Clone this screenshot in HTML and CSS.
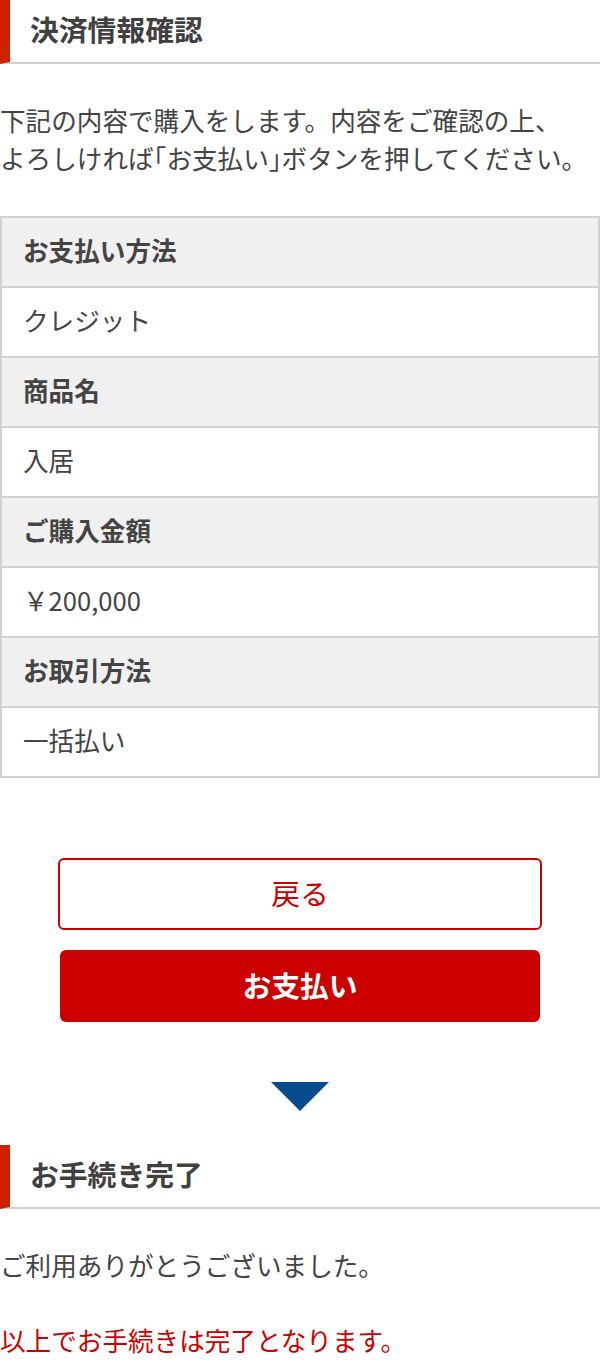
FILE: index.html
```html
<!DOCTYPE html>
<html lang="ja">
<head>
  <meta charset="UTF-8" />
  <title>決済情報確認</title>
  <link rel="stylesheet" href="styles.css">
</head>
<body>
  <h2 class="section-title">決済情報確認</h2>

  <p class="lead">下記の内容で購入をします。内容をご確認の上、<br>よろしければ<span class="kakko">「</span>お支払い<span class="kakko">」</span>ボタンを押してください。</p>

  <table class="confirm">
    <tr><th>お支払い方法</th></tr>
    <tr><td>クレジット</td></tr>
    <tr><th>商品名</th></tr>
    <tr><td>入居</td></tr>
    <tr><th>ご購入金額</th></tr>
    <tr><td>￥200,000</td></tr>
    <tr><th>お取引方法</th></tr>
    <tr><td>一括払い</td></tr>
  </table>

  <div class="actions">
    <button class="btn btn-back">戻る</button>
    <button class="btn btn-pay">お支払い</button>
  </div>

  <div class="arrow"></div>

  <h2 class="section-title">お手続き完了</h2>
  <p class="msg">ご利用ありがとうございました。</p>
  <p class="msg notice">以上でお手続きは完了となります。</p>
</body>
</html>
```

FILE: styles.css
```css
body {
  margin: 0;
  background: #fff;
  color: #444;
  font-family: "Noto Sans CJK JP", "Noto Sans", sans-serif;
  font-size: 25.6px;
  line-height: 38px;
}
.section-title {
  margin: 0;
  height: 62px;
  line-height: 58px;
  padding-left: 20px;
  font-size: 28.8px;
  font-weight: bold;
  color: #404040;
  border-left: 10px solid #cc2200;
  border-bottom: 2px solid #d0d0d0;
}
.lead {
  margin: 37px 0 39px;
  white-space: nowrap;
}
.kakko {
  font-feature-settings: "halt";
}
.confirm {
  width: 100%;
  border-collapse: collapse;
  border: 2px solid #d2d2d2;
}
.confirm th,
.confirm td {
  height: 64px;
  padding: 0 0 4px 21px;
  text-align: left;
  border-top: 2px solid #d2d2d2;
  font-size: 25.6px;
}
.confirm th {
  background: #f0f0f0;
  font-weight: bold;
  color: #444;
}
.confirm td {
  background: #fff;
  font-weight: normal;
}
.actions {
  display: flex;
  flex-direction: column;
  align-items: center;
  gap: 20px;
  margin-top: 80px;
}
.btn {
  font-family: inherit;
  font-size: 28.8px;
  height: 72px;
  padding: 0 0 4px;
  border-radius: 6px;
  cursor: pointer;
}
.btn-back {
  width: 484px;
  background: #fff;
  color: #cc0000;
  border: 2px solid #cc0000;
}
.btn-pay {
  width: 480px;
  background: #cc0000;
  color: #fff;
  font-weight: bold;
  border: none;
}
.arrow {
  width: 0;
  height: 0;
  margin: 60px auto 34px;
  border-left: 29px solid transparent;
  border-right: 29px solid transparent;
  border-top: 29px solid #064b8c;
}
.msg {
  margin: 37px 0 0;
}
.notice {
  color: #cc0000;
}
```
